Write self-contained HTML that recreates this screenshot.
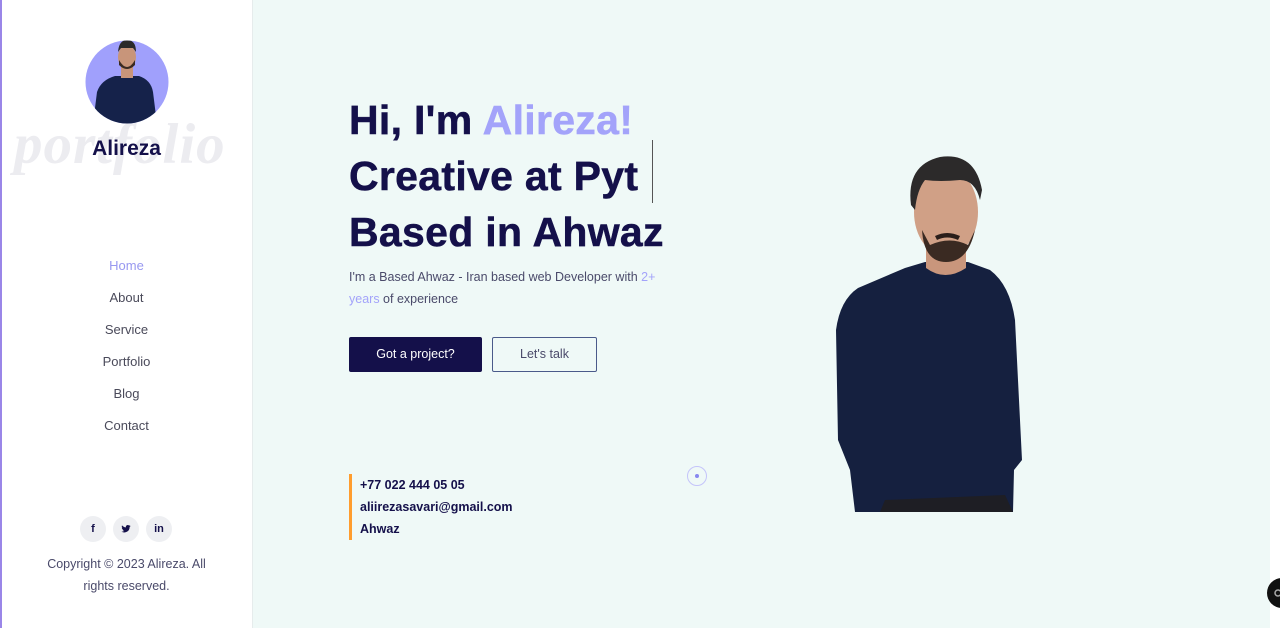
<!DOCTYPE html>
<html><head><meta charset="utf-8"><style>
*{margin:0;padding:0;box-sizing:border-box}
body{width:1280px;height:628px;overflow:hidden;background:#fff;font-family:"Liberation Sans",Arial,sans-serif;position:relative}
.side{position:absolute;left:0;top:0;width:253px;height:628px;background:#fff;border-right:1px solid #e6ecec;border-left:2px solid #9a86e8}
.main{position:absolute;left:253px;top:0;width:1017px;height:628px;background:#eff9f7}
.abs{position:absolute}
.nav a{position:absolute;left:0;width:253px;text-align:center;font-size:13px;color:#4a4a5a;text-decoration:none}
.soc{position:absolute;top:516px;width:26px;height:26px;border-radius:50%;background:#eeeff2;color:#14104a;font-size:11px;font-weight:bold;text-align:center;line-height:26px}
.soc svg{position:absolute;left:8px;top:8px}
h1{position:absolute;left:349px;top:92px;font-size:41px;line-height:56px;color:#14104a;font-weight:bold;letter-spacing:0.3px;-webkit-text-stroke:0.5px #14104a}
</style></head><body>
<div class="side"></div>
<div class="main"></div>
<div class="abs" style="left:14px;top:112px;font-family:'Liberation Serif',serif;font-style:italic;font-weight:bold;font-size:57px;color:#ececf0;letter-spacing:1px">portfolio</div>
<svg class="abs" style="left:85px;top:40px" width="84" height="84" viewBox="0 0 84 84">
<defs><clipPath id="c"><circle cx="42" cy="42" r="41.5"/></clipPath></defs>
<circle cx="42" cy="42" r="41.5" fill="#a0a0fc"/>
<g clip-path="url(#c)">
<path d="M8 84 L12 52 Q16 40 30 36 L54 36 Q66 40 68 52 L72 84Z" fill="#15224a"/>
<rect x="36" y="26" width="12" height="12" fill="#c8957a"/>
<ellipse cx="42" cy="17" rx="9" ry="12" fill="#c8957a"/>
<path d="M33 12 Q34 0 42 0 Q51 0 51 12 L48 8 L36 8Z" fill="#2a2a2a"/>
<path d="M34 20 Q42 34 50 20 L50 25 Q42 33 34 25Z" fill="#3a2a22"/>
</g></svg>
<div class="abs" style="left:0;width:253px;top:137px;text-align:center;font-size:21px;font-weight:bold;color:#14104a">Alireza</div>
<div class="nav">
<a style="top:258px;color:#9898f0">Home</a>
<a style="top:290px">About</a>
<a style="top:322px">Service</a>
<a style="top:354px">Portfolio</a>
<a style="top:386px">Blog</a>
<a style="top:418px">Contact</a>
</div>
<div class="soc" style="left:80px">f</div>
<div class="soc" style="left:113px"><svg width="10" height="10" viewBox="0 0 24 24"><path fill="#14104a" d="M23 4.6c-.8.4-1.7.6-2.6.7.9-.6 1.6-1.4 2-2.5-.9.5-1.9.9-2.9 1.1A4.5 4.5 0 0 0 11.8 8C8 7.8 4.7 6 2.5 3.2c-1.3 2.2-.6 4.9 1.4 6.1-.7 0-1.4-.2-2-.6 0 2.200 1.6 4.1 3.6 4.5-.7.2-1.4.2-2 .1.6 1.8 2.3 3.1 4.2 3.1A9 9 0 0 1 1 18.3 12.8 12.8 0 0 0 20.7 7.5c.9-.6 1.7-1.5 2.3-2.9z"/></svg></div>
<div class="soc" style="left:146px">in</div>
<div class="abs" style="left:0;width:253px;top:553px;text-align:center;font-size:12.5px;line-height:22px;color:#4a4a6a">Copyright © 2023 Alireza. All<br>rights reserved.</div>

<h1>Hi, I'm <span style="color:#a3a3fa;-webkit-text-stroke:0.5px #a3a3fa">Alireza!</span><br>Creative at Pyt<br>Based in Ahwaz</h1>
<div class="abs" style="left:652px;top:140px;width:1px;height:63px;background:#555"></div>
<div class="abs" style="left:349px;top:266px;width:320px;font-size:12.5px;line-height:22px;color:#4a4a6a">I'm a Based Ahwaz - Iran based web Developer with <span style="color:#a3a3fa">2+ years</span> of experience</div>
<div class="abs" style="left:349px;top:337px;width:133px;height:35px;background:#14104a;border-radius:2px;color:#fff;font-size:12.5px;text-align:center;line-height:35px">Got a project?</div>
<div class="abs" style="left:492px;top:337px;width:105px;height:35px;border:1px solid #4a5a8a;border-radius:2px;color:#4a4a6a;font-size:12.5px;text-align:center;line-height:33px">Let's talk</div>
<div class="abs" style="left:349px;top:474px;width:3px;height:66px;background:#ff9d2e"></div>
<div class="abs" style="left:360px;top:474px;font-size:12.5px;line-height:22px;font-weight:bold;color:#14104a">+77 022 444 05 05<br>aliirezasavari@gmail.com<br>Ahwaz</div>
<div class="abs" style="left:687px;top:466px;width:20px;height:20px;border-radius:50%;border:1.5px solid #c4c4fa"></div>
<div class="abs" style="left:695px;top:474px;width:4px;height:4px;border-radius:50%;background:#8888f0"></div>

<svg class="abs" style="left:0;top:0" width="1280" height="628" viewBox="0 0 1280 628">
<path d="M855 512 L850 470 L838 440 L836 330 Q840 300 858 288 L905 268 L925 262 L968 262 L990 270 Q1010 285 1015 320 L1022 460 L1014 470 L1013 512Z" fill="#15203f"/>
<path d="M880 512 L885 500 L1005 495 L1013 512Z" fill="#1e1e24"/>
<path d="M926 240 L926 268 Q945 282 966 268 L966 240Z" fill="#c9967c"/>
<ellipse cx="946" cy="212" rx="32" ry="44" fill="#d0a086"/>
<path d="M911 205 Q906 165 940 157 Q975 152 982 190 L980 200 Q975 180 960 180 Q940 182 925 180 Q917 190 915 210Z" fill="#2c2a2a"/>
<path d="M922 230 Q924 262 946 262 Q968 262 975 230 L968 245 Q950 236 930 245Z" fill="#3a2a22"/>
<path d="M935 236 Q947 230 960 236 L958 240 Q947 235 937 240Z" fill="#2a1e1a"/>
<rect x="1270" y="0" width="10" height="628" fill="#fff"/>
<circle cx="1282" cy="593" r="15" fill="#111"/>
<circle cx="1278" cy="593" r="3" fill="none" stroke="#aaa" stroke-width="1.5"/>
</svg>
</body></html>
